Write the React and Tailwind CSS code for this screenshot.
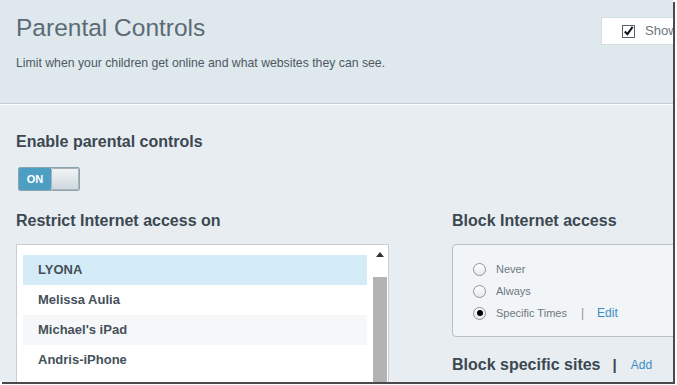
import React from "react";

const devices = ["LYONA", "Melissa Aulia", "Michael's iPad", "Andris-iPhone"];

const Radio = ({ checked }) => (
  <span className="flex h-[13px] w-[13px] items-center justify-center rounded-full border border-[#8a959c] bg-gradient-to-b from-white to-[#e4e9ec]">
    {checked && <span className="h-[6px] w-[6px] rounded-full bg-black" />}
  </span>
);

const App = () => {
  return (
    <div
      className="h-[385px] w-[677px] bg-white"
      style={{ fontFamily: '"Liberation Sans", Arial, sans-serif' }}
    >
      <div className="h-[382px] w-[673px] overflow-hidden bg-[#e7edf1] shadow-[2px_2px_0_#4a4a4a]">
        {/* header */}
        <div className="relative h-[104px] border-b border-[#c3cbcf] bg-[#dee8ed] px-4 pt-[13px]">
          <h1 className="text-[24.5px] leading-[30px] text-[#5b6b76]">Parental Controls</h1>
          <p className="mt-[13px] text-[12.25px] leading-[15px] text-[#4d5862]">
            Limit when your children get online and what websites they can see.
          </p>
          <div className="absolute left-[601px] top-[17px] flex h-[28px] w-[90px] items-center border border-[#d6dde1] bg-white pl-[20px]">
            <span className="flex h-[13px] w-[13px] items-center justify-center border border-[#55606a] bg-white">
              <svg viewBox="0 0 12 12" className="h-[12px] w-[12px]">
                <path d="M2 6.5 L4.8 9.5 L10.5 1.5" fill="none" stroke="#111" strokeWidth="2.2" />
              </svg>
            </span>
            <span className="ml-[10px] text-[13px] text-[#6a747c]">Show</span>
          </div>
        </div>
        <div className="h-px bg-white" />

        {/* body */}
        <div className="px-4 pt-[26px]">
          <h2 className="text-[16px] font-bold leading-[22px] text-[#3b4852]">Enable parental controls</h2>
          <div className="ml-[2px] mt-[14px] flex h-[24px] w-[62px] overflow-hidden rounded-[2px] border border-[#8fa3ae]">
            <span className="flex w-[32px] items-center justify-center bg-[#4c9ec3] text-[11px] font-bold text-white">
              ON
            </span>
            <span className="flex-1 rounded-[2px] border border-[#a9b4ba] bg-gradient-to-b from-[#f1f4f6] to-[#cfd8dd]" />
          </div>

          <div className="mt-[19px] flex">
            {/* left column */}
            <div className="w-[373px] shrink-0">
              <h2 className="text-[16px] font-bold leading-[22px] text-[#3b4852]">Restrict Internet access on</h2>
              <div className="mt-[12px] flex h-[160px] border border-[#c7cfd4] bg-white">
                <div className="flex-1 pl-[6px] pr-[6px] pt-[10px]">
                  {devices.map((d, i) => (
                    <div
                      key={d}
                      className={`flex h-[30px] items-center pl-[15px] text-[13px] font-bold text-[#45505a] ${
                        i === 0 ? "bg-[#d4ecf8]" : i === 2 ? "bg-[#f6f7f8]" : "bg-white"
                      }`}
                    >
                      {d}
                    </div>
                  ))}
                </div>
                <div className="mr-[1px] mt-[1px] flex w-[14px] flex-col">
                  <div className="flex h-[31px] items-start justify-center pt-[6px]">
                    <svg viewBox="0 0 8 5" className="h-[5px] w-[8px]">
                      <path d="M0 5 L4 0 L8 5 Z" fill="#333" />
                    </svg>
                  </div>
                  <div className="flex-1 bg-[#b3b3b3]" />
                </div>
              </div>
            </div>

            {/* right column */}
            <div className="ml-[63px] w-[260px] shrink-0">
              <h2 className="text-[16px] font-bold leading-[22px] text-[#3b4852]">Block Internet access</h2>
              <div className="mt-[12px] h-[93px] rounded-[4px] border border-[#b7c0c5] bg-[#f2f5f7] pl-[20px] pt-[13px]">
                {["Never", "Always", "Specific Times"].map((label, i) => (
                  <div key={label} className="flex h-[22px] items-center">
                    <Radio checked={i === 2} />
                    <span className="ml-[10px] text-[11px] text-[#6d7780]">{label}</span>
                    {i === 2 && (
                      <>
                        <span className="ml-[14px] text-[12px] text-[#8a949b]">|</span>
                        <span className="ml-[13px] text-[12px] text-[#3b8cc4]">Edit</span>
                      </>
                    )}
                  </div>
                ))}
              </div>
              <div className="mt-[17px] flex items-center">
                <h2 className="text-[16px] font-bold leading-[18px] text-[#3b4852]">Block specific sites</h2>
                <span className="ml-[12px] text-[15px] font-bold text-[#3b4852]">|</span>
                <span className="ml-[14px] text-[12px] text-[#3b8cc4]">Add</span>
              </div>
            </div>
          </div>
        </div>
      </div>
    </div>
  );
};

export default App;
